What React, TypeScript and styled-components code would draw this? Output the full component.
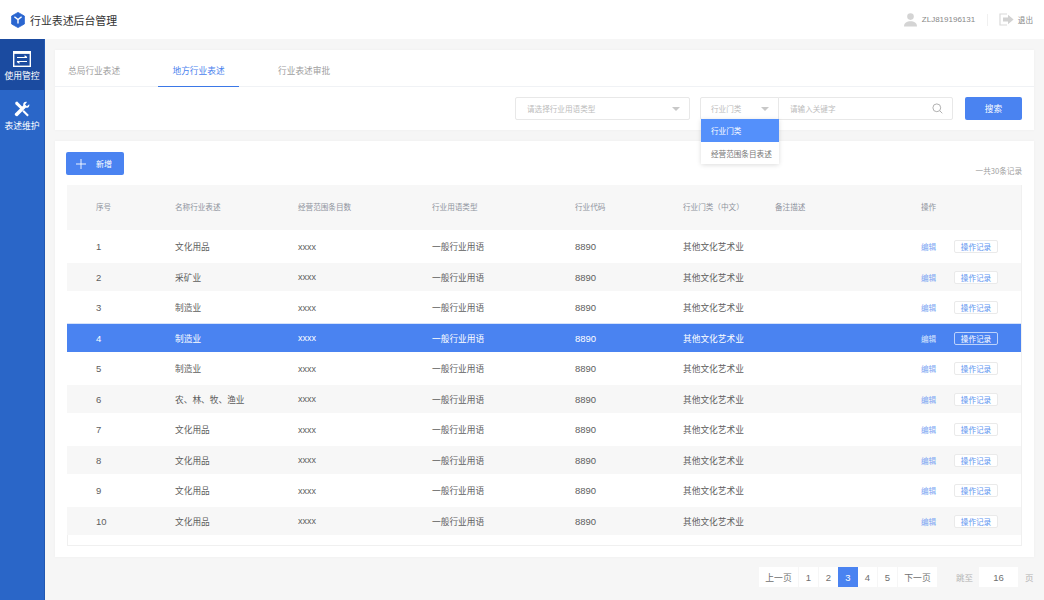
import React from "react";
import styled, { createGlobalStyle } from "styled-components";

const Global = createGlobalStyle`
  html, body { margin: 0; padding: 0; height: 600px; overflow: hidden; background: #f6f6f6; }
  body { font-family: "Noto Sans CJK SC", "Liberation Sans", sans-serif; -webkit-font-smoothing: antialiased; }
  * { box-sizing: border-box; }
`;

const Page = styled.div`
  width: 1044px; height: 600px; display: flex; flex-direction: column; overflow: hidden;
`;
const Header = styled.header`
  height: 39px; flex: none; background: #fff; display: flex; align-items: center; padding: 0 11px;
`;
const Brand = styled.div`
  display: flex; align-items: center; gap: 5px; font-size: 10.9px; color: #333; flex: 1;
`;
const UserArea = styled.div`
  display: flex; align-items: center; font-size: 7.6px; color: #888;
`;
const UserName = styled.span`
  margin-left: 5px; font-family: "Liberation Sans", sans-serif; font-size: 8px; color: #888; width: 52px; white-space: nowrap;
`;
const VLine = styled.span`
  width: 1px; height: 12px; background: #f0f0f0; margin: 0 11px 0 13px;
`;
const Logout = styled.span`
  margin-left: 4px; color: #888;
`;
const Body = styled.div`
  flex: 1; display: flex; min-height: 0;
`;
const Sidebar = styled.nav`
  width: 45px; flex: none; background: #2a66c8; border-right: 1px solid #2258b2;
  display: flex; flex-direction: column;
`;
const NavItem = styled.div<{ $active?: boolean }>`
  height: ${p => (p.$active ? 51 : 52)}px; background: ${p => (p.$active ? "#1b4ba0" : "transparent")};
  display: flex; flex-direction: column; align-items: center; justify-content: flex-start;
  padding-top: ${p => (p.$active ? 12 : 11)}px; gap: 2px; color: #fff; font-size: 8.8px; line-height: 13px; white-space: nowrap;
`;
const Main = styled.main`
  flex: 1; padding: 11px 10px 0 10px; display: flex; flex-direction: column; min-width: 0;
`;
const Card = styled.section`
  background: #fff; box-shadow: 0 0 3px rgba(0,0,0,.04);
`;
const FilterCard = styled(Card)`
  height: 80px; flex: none;
`;
const Tabs = styled.div`
  height: 37px; display: flex; border-bottom: 1px solid #f0f2f5; padding-left: 13px;
`;
const Tab = styled.div<{ $active?: boolean; $w: number; $gap?: number }>`
  width: ${p => p.$w}px; height: 37px; font-size: 8.7px; line-height: 41px; margin-left: ${p => p.$gap ?? 0}px;
  color: ${p => (p.$active ? "#4a82ee" : "#a0a0a0")};
  ${p => p.$active ? "border-bottom: 1px solid #3b78e7; text-align: center;" : ""}
`;
const Filters = styled.div`
  height: 43px; display: flex; align-items: flex-start; padding: 10px 12px 0 460px;
`;
const Select = styled.div<{ $w: number }>`
  position: relative; width: ${p => p.$w}px; height: 23px; border: 1px solid #e8e8e8; border-radius: 2px;
  background: #fff; font-size: 7.6px; color: #bcbcbc; display: flex; align-items: center; justify-content: space-between;
  padding: 0 9px 0 11px; flex: none;
`;
const IndustrySelect = styled(Select)`
  margin-left: 10px; border-radius: 2px 0 0 2px; padding-left: 10px;
`;
const Caret = styled.span`
  width: 0; height: 0; border-left: 4px solid transparent; border-right: 4px solid transparent; border-top: 4.5px solid #c8c8c8;
`;
const Menu = styled.div`
  position: absolute; left: 0; top: 21px; width: 78px; background: #fff; border-radius: 0 0 2px 2px;
  box-shadow: 0 1px 5px rgba(0,0,0,.14); z-index: 5;
`;
const MenuItem = styled.div<{ $active?: boolean }>`
  height: ${p => (p.$active ? 23 : 22)}px; display: flex; align-items: center; padding-left: 10px; font-size: 7.6px; white-space: nowrap;
  background: ${p => (p.$active ? "#5490fb" : "#fff")}; color: ${p => (p.$active ? "#fff" : "#777")};
`;
const SearchBox = styled.div`
  width: 175px; height: 23px; margin-left: -1px; border: 1px solid #e8e8e8; border-radius: 0 2px 2px 0; display: flex; align-items: center;
  justify-content: space-between; padding: 0 9px 0 11px; font-size: 7.6px; color: #bcbcbc; flex: none;
`;
const SearchButton = styled.button`
  width: 57px; height: 23px; margin-left: 12px; border: 0; border-radius: 2px; background: #4a83f1; color: #fff; font: inherit; font-size: 8.7px; padding: 0; flex: none;
`;
const TableCard = styled(Card)`
  margin-top: 11px; height: 416px; flex: none; padding: 11px 12px 0 12px;
`;
const TopBar = styled.div`
  height: 33px; display: flex; justify-content: space-between; align-items: flex-start; margin-left: -1px;
`;
const AddButton = styled.button`
  width: 58px; height: 23px; border: 0; border-radius: 2px; background: #4a83f1; color: #fff; font: inherit; font-size: 8px;
  display: flex; align-items: center; padding: 0 0 0 10px; gap: 10px;
`;
const Count = styled.span`
  font-size: 7.6px; color: #a0a0a0; margin-top: 13px; line-height: 12px;
`;
const TableBox = styled.div`
  height: 361px; border: 1px solid #f0f0f0; border-top: 0;
`;
const Row = styled.div<{ $head?: boolean; $hl?: boolean; $even?: boolean }>`
  display: grid; grid-template-columns: 29px 79px 123px 134px 143px 108px 92px 146px 33px 1fr;
  align-items: center; margin-left: -1px;
  height: ${p => (p.$head ? 45 : p.$even ? 28 : 33)}px;
  font-size: ${p => (p.$head ? 7.6 : 8.7)}px;
  background: ${p => (p.$head ? "#f7f7f7" : p.$hl ? "#4a83f1" : p.$even ? "#f7f7f7" : "#fff")};
  color: ${p => (p.$head ? "#8f949e" : p.$hl ? "#fff" : "#5e5e5e")};
  ${p => p.$hl ? "box-shadow: 0 -1px 0 #d5e2fa;" : ""}
  ${p => p.$head ? "padding-bottom: 2px;" : ""}
`;
const Cell = styled.span<{ $latin?: boolean; $size?: number }>`
  white-space: nowrap; ${p => p.$latin ? `font-family: "Liberation Sans", sans-serif; font-size: ${p.$size ?? 9.5}px;` : ""}
`;
const EditLink = styled.span<{ $hl?: boolean }>`
  font-size: 7.6px; color: ${p => (p.$hl ? "#dbe7fd" : "#7ba5f3")};
`;
const LogButton = styled.span<{ $hl?: boolean }>`
  display: flex; align-items: center; justify-content: center; width: 44px; height: 13px; border-radius: 2px;
  font-size: 7.6px; white-space: nowrap;
  border: 1px solid ${p => (p.$hl ? "#bcd2fb" : "#eaeaea")};
  color: ${p => (p.$hl ? "#fff" : "#6095f0")};
  background: ${p => (p.$hl ? "transparent" : "#fff")};
`;
const Pager = styled.div`
  height: 43px; display: flex; align-items: flex-start; padding-top: 10px; padding-left: 703px;
`;
const PageCell = styled.span<{ $w?: number; $active?: boolean; $small?: boolean; $flush?: boolean }>`
  width: ${p => p.$w ?? 19}px; height: 20px; margin-left: ${p => (p.$active || p.$flush ? 0 : 1)}px; display: flex; align-items: center; justify-content: center;
  background: ${p => (p.$active ? "#4a83f1" : "#fff")}; color: ${p => (p.$active ? "#fff" : "#707070")};
  font-family: ${p => (p.$small ? `"Noto Sans CJK SC", sans-serif` : `"Liberation Sans", sans-serif`)};
  font-size: ${p => (p.$small ? 8.8 : 9.5)}px; flex: none; white-space: nowrap;
`;
const PagerLabel = styled.span<{ $gap?: number }>`
  font-size: 8.5px; color: #b4b4b4; line-height: 20px; white-space: nowrap; flex: none; margin-left: ${p => p.$gap ?? 0}px;
`;
const JumpInput = styled.span`
  width: 39px; height: 20px; background: #fff; margin: 0 7px 0 6px; font-family: "Liberation Sans", sans-serif;
  font-size: 9.5px; color: #707070; display: flex; align-items: center; justify-content: center; flex: none;
`;

const data: [string, string][] = [
  ["1", "文化用品"], ["2", "采矿业"], ["3", "制造业"], ["4", "制造业"], ["5", "制造业"],
  ["6", "农、林、牧、渔业"], ["7", "文化用品"], ["8", "文化用品"], ["9", "文化用品"], ["10", "文化用品"],
];

const LogoIcon = () => (
  <svg width="14" height="16" viewBox="0 0 14 16">
    <path d="M7 .4 L13.4 4 V12 L7 15.6 L.6 12 V4 Z" fill="#2a66d0" stroke="#2a66d0" strokeWidth=".8" strokeLinejoin="round" />
    <path d="M3.4 4.8 L7 7.6 L10.6 4.8 M7 7.6 V11.6" stroke="#fff" strokeWidth="1.4" fill="none" />
  </svg>
);
const TransferIcon = () => (
  <svg width="18" height="16" viewBox="0 0 18 16">
    <rect x="0.7" y="0.7" width="16.6" height="14.6" fill="none" stroke="#fff" strokeWidth="1.4" />
    <rect x="0.7" y="0.7" width="16.6" height="2.2" fill="#fff" />
    <path d="M4 6.5 H14 M11.5 4.7 L14 6.5 M14 10.5 H4 M6.5 12.3 L4 10.5" stroke="#fff" strokeWidth="1.1" fill="none" />
  </svg>
);
const ToolsIcon = () => (
  <svg width="16" height="16" viewBox="0 0 16 16">
    <path d="M1.5 1 L3.2 .6 L9 6.5 L7 8.5 L1.2 3 Z" fill="#fff" />
    <path d="M15.2 3.2 L12.9 5.3 L11 3.5 L13 1 C10.7 .3 8.9 2 9.2 4.4 L1 12.4 C-.1 13.7 2.2 16 3.6 14.9 L11.7 6.8 C14.1 7.2 15.9 5.5 15.2 3.2 Z" fill="#fff" />
    <path d="M9.8 9 L14.8 14 L13.4 15.4 L8.4 10.4 Z" fill="#fff" />
  </svg>
);
const UserIcon = () => (
  <svg width="13" height="14" viewBox="0 0 13 14">
    <circle cx="6.5" cy="3.6" r="3.3" fill="#d4d4d4" />
    <path d="M0 13.4 C0 9.6 3 8.2 6.5 8.2 C10 8.2 13 9.6 13 13.4 Z" fill="#d4d4d4" />
  </svg>
);
const LogoutIcon = () => (
  <svg width="15" height="13" viewBox="0 0 15 13">
    <path d="M8 1 H1 V12 H8" stroke="#dadada" strokeWidth="1.2" fill="none" />
    <path d="M4 4.6 H9 V1.8 L14.6 6.5 L9 11.2 V8.4 H4 Z" fill="#d2d2d2" />
  </svg>
);
const SearchIcon = () => (
  <svg width="11" height="11" viewBox="0 0 11 11">
    <circle cx="4.8" cy="4.8" r="3.9" fill="none" stroke="#a8a8a8" strokeWidth=".9" />
    <path d="M7.7 7.7 L10.3 10.3" stroke="#a8a8a8" strokeWidth=".9" />
  </svg>
);
const PlusIcon = () => (
  <svg width="10" height="10" viewBox="0 0 10 10">
    <path d="M5 0 V10 M0 5 H10" stroke="#fff" strokeWidth=".9" />
  </svg>
);

export default function App() {
  return (
    <Page>
      <Global />
      <Header>
        <Brand><LogoIcon />行业表述后台管理</Brand>
        <UserArea>
          <UserIcon />
          <UserName>ZLJ819196131</UserName>
          <VLine />
          <LogoutIcon />
          <Logout>退出</Logout>
        </UserArea>
      </Header>
      <Body>
        <Sidebar>
          <NavItem $active><TransferIcon />使用管控</NavItem>
          <NavItem><ToolsIcon />表述维护</NavItem>
        </Sidebar>
        <Main>
          <FilterCard>
            <Tabs>
              <Tab $w={90}>总局行业表述</Tab>
              <Tab $w={81} $active>地方行业表述</Tab>
              <Tab $w={100} $gap={39}>行业表述审批</Tab>
            </Tabs>
            <Filters>
              <Select $w={175}>请选择行业用语类型<Caret /></Select>
              <IndustrySelect $w={79}>
                行业门类<Caret />
                <Menu>
                  <MenuItem $active>行业门类</MenuItem>
                  <MenuItem>经营范围条目表述</MenuItem>
                </Menu>
              </IndustrySelect>
              <SearchBox>请输入关键字<SearchIcon /></SearchBox>
              <SearchButton>搜索</SearchButton>
            </Filters>
          </FilterCard>
          <TableCard>
            <TopBar>
              <AddButton><PlusIcon />新增</AddButton>
              <Count>一共30条记录</Count>
            </TopBar>
            <TableBox>
              <Row $head>
                <span />
                <Cell>序号</Cell><Cell>名称行业表述</Cell><Cell>经营范围条目数</Cell><Cell>行业用语类型</Cell>
                <Cell>行业代码</Cell><Cell>行业门类（中文）</Cell><Cell>备注描述</Cell><Cell>操作</Cell><span />
              </Row>
              {data.map(([n, name], i) => {
                const hl = i === 3;
                return (
                  <Row key={n} $hl={hl} $even={i % 2 === 1}>
                    <span />
                    <Cell $latin>{n}</Cell>
                    <Cell>{name}</Cell>
                    <Cell $latin $size={9}>xxxx</Cell>
                    <Cell>一般行业用语</Cell>
                    <Cell $latin>8890</Cell>
                    <Cell>其他文化艺术业</Cell>
                    <span />
                    <EditLink $hl={hl}>编辑</EditLink>
                    <LogButton $hl={hl}>操作记录</LogButton>
                  </Row>
                );
              })}
            </TableBox>
          </TableCard>
          <Pager>
            <PageCell $w={39} $small>上一页</PageCell>
            <PageCell>1</PageCell>
            <PageCell>2</PageCell>
            <PageCell $active $w={20}>3</PageCell>
            <PageCell $flush>4</PageCell>
            <PageCell>5</PageCell>
            <PageCell $w={39} $small>下一页</PageCell>
            <PagerLabel $gap={19}>跳至</PagerLabel>
            <JumpInput>16</JumpInput>
            <PagerLabel>页</PagerLabel>
          </Pager>
        </Main>
      </Body>
    </Page>
  );
}
